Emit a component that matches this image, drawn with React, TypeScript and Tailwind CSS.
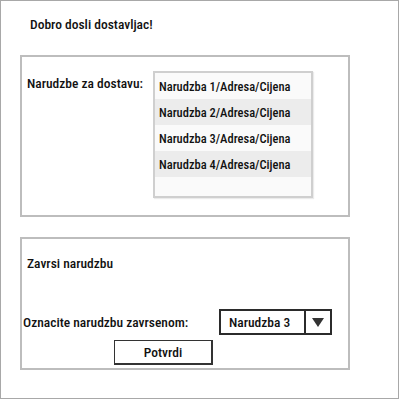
const orders = [
  "Narudzba 1/Adresa/Cijena",
  "Narudzba 2/Adresa/Cijena",
  "Narudzba 3/Adresa/Cijena",
  "Narudzba 4/Adresa/Cijena",
];

export default function App() {
  return (
    <div
      className="w-[399px] h-[399px] border border-[#a8a8a8] bg-white text-[13.5px] font-medium text-[#111] leading-[17px]"
      style={{ fontFamily: "'Roboto Condensed', 'Liberation Sans', sans-serif" }}
    >
      {/* header */}
      <div className="pl-[29px] pt-[15px] h-[54px]">Dobro dosli dostavljac!</div>

      {/* orders panel */}
      <div className="ml-[19px] w-[330px] h-[162px] border-2 border-[#bdbdbd] flex">
        <div className="w-[131px] pl-[5px] pt-[18px]">Narudzbe za dostavu:</div>
        <div className="mt-[14px] w-[160px] h-[127px] border-2 border-[#cfcfcf] bg-[#fafafa] shadow-[1px_1px_1px_rgba(0,0,0,0.08)] flex flex-col text-[12.5px]">
          {orders.map((o, i) => (
            <div
              key={o}
              className={`h-[26px] pl-[4px] flex items-center ${i % 2 === 1 ? "bg-[#ececec]" : "bg-[#fafafa]"}`}
            >
              {o}
            </div>
          ))}
        </div>
      </div>

      {/* finish panel */}
      <div className="ml-[19px] mt-[20px] w-[330px] h-[133px] border-2 border-[#bdbdbd] flex flex-col">
        <div className="pl-[5px] pt-[16px]">Zavrsi narudzbu</div>
        <div className="mt-[37px] flex items-center">
          <div className="w-[197px] pl-[1px]">Oznacite narudzbu zavrsenom:</div>
          <div className="w-[113px] h-[26px] border-2 border-[#2b2b2b] flex">
            <div className="flex-1 flex items-center pl-[8px]">Narudzba 3</div>
            <div className="w-[26px] border-l-2 border-[#2b2b2b] flex items-center justify-center">
              <svg width="12" height="9" viewBox="0 0 12 9">
                <path d="M0 0 L12 0 L6 9 Z" fill="#333" />
              </svg>
            </div>
          </div>
        </div>
        <div className="mt-[5px] ml-[92px] w-[99px] h-[25px] border border-[#333] border-r-2 border-b-2 flex items-center justify-center">
          Potvrdi
        </div>
      </div>
    </div>
  );
}
